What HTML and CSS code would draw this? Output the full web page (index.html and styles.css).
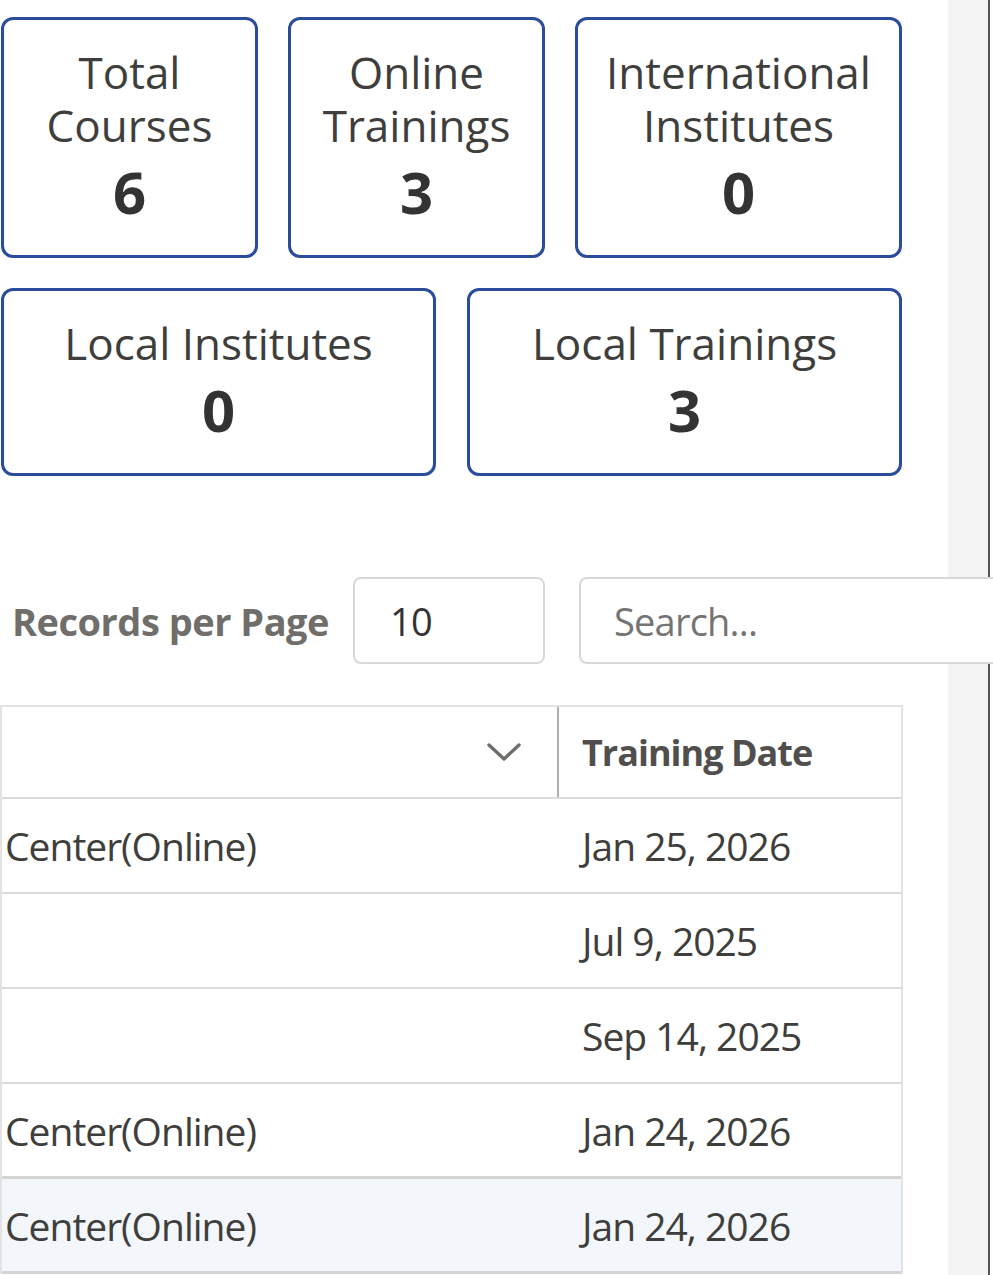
FILE: index.html
```html
<!DOCTYPE html>
<html lang="en">
<head>
    <meta charset="UTF-8" />
    <meta name="viewport" content="width=device-width, initial-scale=1.0" />
    <title>Training Dashboard</title>
    <link rel="stylesheet" href="styles.css">
</head>
<body>
    <div class="layout">
        <main class="content">
            <section class="stats">
                <div class="stats-row top">
                    <div class="card">
                        <div class="card-label">Total Courses</div>
                        <div class="card-value">6</div>
                    </div>
                    <div class="card">
                        <div class="card-label">Online Trainings</div>
                        <div class="card-value">3</div>
                    </div>
                    <div class="card">
                        <div class="card-label">International Institutes</div>
                        <div class="card-value">0</div>
                    </div>
                </div>
                <div class="stats-row bottom">
                    <div class="card">
                        <div class="card-label">Local Institutes</div>
                        <div class="card-value">0</div>
                    </div>
                    <div class="card">
                        <div class="card-label">Local Trainings</div>
                        <div class="card-value">3</div>
                    </div>
                </div>
            </section>

            <div class="toolbar">
                <label class="toolbar-label" for="pageSize">Records per Page</label>
                <input id="pageSize" class="field page-size" type="text" value="10" />
                <input class="field search" type="text" placeholder="Search..." />
            </div>

            <div class="datatable">
                <div class="dt-row dt-head">
                    <div class="dt-cell col-name">
                        <svg class="chevron" width="34" height="20" viewBox="0 0 34 20">
                            <polyline points="2,3 17,17 32,3" fill="none" stroke="#706e6b" stroke-width="3.4" stroke-linecap="round" stroke-linejoin="round"/>
                        </svg>
                    </div>
                    <div class="dt-cell col-date">Training Date</div>
                </div>
                <div class="dt-row">
                    <div class="dt-cell col-name">Center(Online)</div>
                    <div class="dt-cell col-date">Jan 25, 2026</div>
                </div>
                <div class="dt-row">
                    <div class="dt-cell col-name"></div>
                    <div class="dt-cell col-date">Jul 9, 2025</div>
                </div>
                <div class="dt-row">
                    <div class="dt-cell col-name"></div>
                    <div class="dt-cell col-date">Sep 14, 2025</div>
                </div>
                <div class="dt-row before-hover">
                    <div class="dt-cell col-name">Center(Online)</div>
                    <div class="dt-cell col-date">Jan 24, 2026</div>
                </div>
                <div class="dt-row is-hovered">
                    <div class="dt-cell col-name">Center(Online)</div>
                    <div class="dt-cell col-date">Jan 24, 2026</div>
                </div>
            </div>
        </main>
        <aside class="rail"></aside>
    </div>
</body>
</html>
```

FILE: styles.css
```css
/* Training dashboard */
* {
    box-sizing: border-box;
}
body {
    font-family: 'Open Sans', 'Noto Sans', sans-serif;
    margin: 0;
    padding: 0;
    color: #3e3e3c;
    background-color: #ffffff;
    overflow: hidden;
}
.layout {
    display: flex;
    min-height: 1275px;
}
.content {
    width: 948px;
    flex: none;
    padding-top: 17px;
    position: relative;
    z-index: 1;
}
.rail {
    width: 42px;
    flex: none;
    background-color: #f3f3f3;
    border-right: 2px solid #555555;
}

/* stat cards */
.stats {
    display: grid;
    gap: 30px;
    width: 902px;
    padding-left: 1px;
}
.stats-row {
    display: grid;
    gap: 30px;
}
.stats-row.top { grid-template-columns: 257px 257px 1fr; }
.stats-row.bottom { grid-template-columns: 1fr 1fr; gap: 31px; }
.card {
    border: 3px solid #2b4b9b;
    border-radius: 12px;
    padding: 26px 10px 28px;
    text-align: center;
}
.card-label {
    font-size: 44px;
    line-height: 53px;
    color: #3e3e3c;
}
.card-value {
    font-size: 58px;
    line-height: 70px;
    font-weight: 700;
    margin-top: 5px;
    color: #333333;
}

/* toolbar */
.toolbar {
    display: flex;
    align-items: center;
    margin-top: 101px;
    padding-left: 12px;
}
.toolbar-label {
    font-size: 38px;
    font-weight: 700;
    letter-spacing: -0.5px;
    color: #706e6b;
    margin-right: 24px;
    white-space: nowrap;
    flex: none;
}
.field {
    font-family: inherit;
    font-size: 38px;
    letter-spacing: -0.8px;
    height: 87px;
    border: 2px solid #d8d8d8;
    border-radius: 8px;
    background: #fff;
    color: #333;
    outline: none;
    flex: none;
}
.page-size {
    width: 192px;
    padding-left: 35px;
}
.search {
    width: 480px;
    margin-left: 34px;
    padding-left: 33px;
}
.search::placeholder {
    color: #747474;
}

/* datatable */
.datatable {
    margin-top: 41px;
    width: 903px;
    border: 2px solid #e3e3e3;
    border-bottom: none;
}
.dt-row {
    display: grid;
    grid-template-columns: 557px 1fr;
    height: 95px;
    border-bottom: 2px solid #dddbda;
}
.dt-head {
    height: 92px;
}
.dt-cell {
    display: flex;
    align-items: center;
    font-size: 39px;
    letter-spacing: -1px;
    color: #3e3e3c;
    white-space: nowrap;
    overflow: hidden;
}
.col-name { padding-left: 3px; }
.col-date { padding-left: 23px; }
.dt-head .col-name {
    justify-content: flex-end;
    padding-right: 36px;
    border-right: 2px solid #b0adab;
}
.dt-head .col-date {
    font-size: 36px;
    font-weight: 700;
    color: #514f4d;
}
.dt-row.before-hover {
    border-bottom: 3px solid #d4d4d4;
}
.dt-row.is-hovered {
    background-color: #f3f6fa;
    border-bottom: 3px solid #d4d4d4;
}
```
